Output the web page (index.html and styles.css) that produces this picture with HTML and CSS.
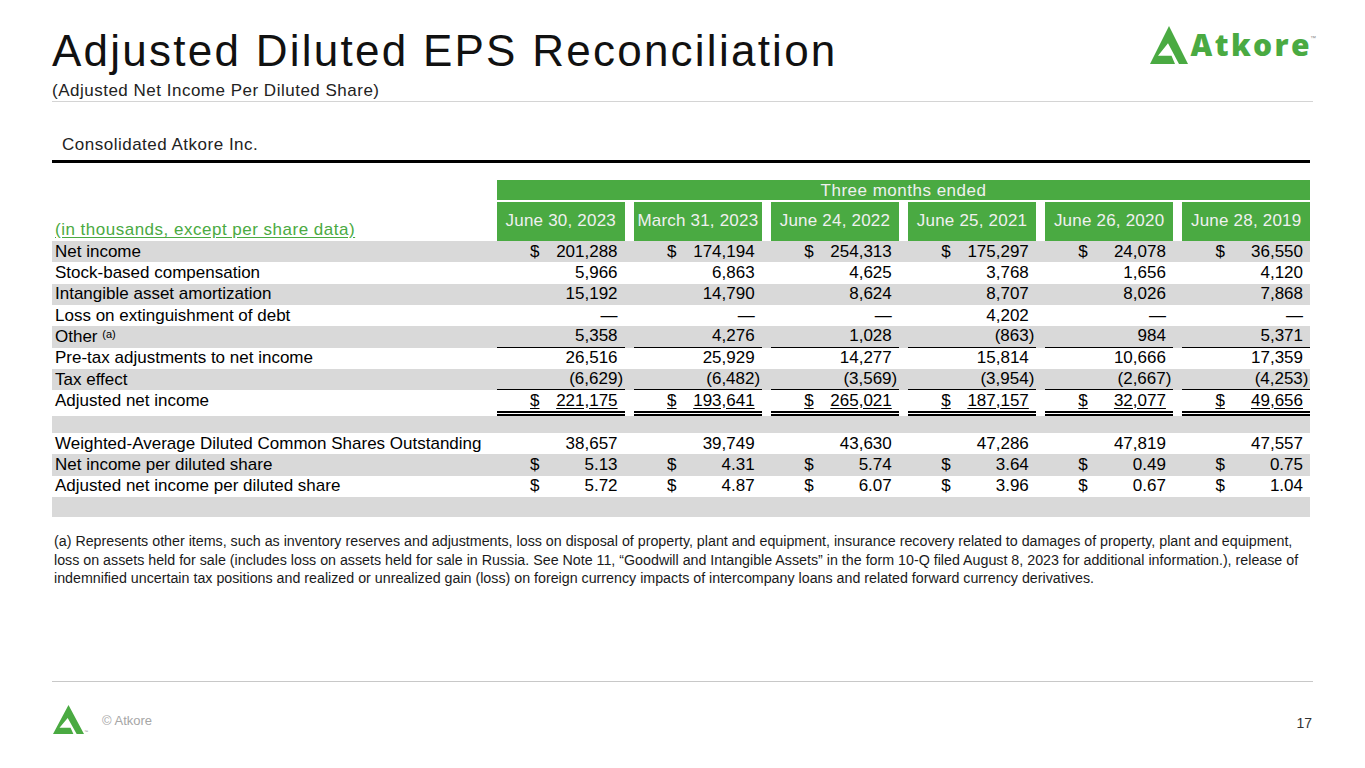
FILE: index.html
```html
<!DOCTYPE html>
<html lang="en">
<head>
<meta charset="utf-8">
<title>Adjusted Diluted EPS Reconciliation</title>
<link rel="stylesheet" href="styles.css">
</head>
<body>
<div class="slide">
  <header class="top">
    <div class="titles">
      <h1 class="title">Adjusted Diluted EPS Reconciliation</h1>
      <p class="subtitle">(Adjusted Net Income Per Diluted Share)</p>
    </div>
    <div class="logo">
      <svg class="logo-mark" viewBox="0 0 38 42" width="38" height="38" preserveAspectRatio="none" aria-hidden="true">
        <path d="M19 0 L38 42 L29 42 L18 19 L8 33 L21.5 33 L25 42 L0 42 Z" fill="#4aaa42"/>
      </svg>
      <span class="logo-text">Atkore</span><span class="logo-tm">™</span>
    </div>
  </header>

  <div class="section">Consolidated Atkore Inc.</div>

  <div class="table">
    <div class="grid band-row">
      <div class="band">Three months ended</div>
    </div>
    <div class="grid head-row">
      <div class="units">(in thousands, except per share data)</div>
      <div class="hcell">June 30, 2023</div>
      <div class="hcell">March 31, 2023</div>
      <div class="hcell">June 24, 2022</div>
      <div class="hcell">June 25, 2021</div>
      <div class="hcell">June 26, 2020</div>
      <div class="hcell">June 28, 2019</div>
    </div>

    <div class="grid row alt">
      <div class="label">Net income</div>
      <div class="cell"><span class="cur">$</span><span class="num">201,288</span></div>
      <div class="cell"><span class="cur">$</span><span class="num">174,194</span></div>
      <div class="cell"><span class="cur">$</span><span class="num">254,313</span></div>
      <div class="cell"><span class="cur">$</span><span class="num">175,297</span></div>
      <div class="cell"><span class="cur">$</span><span class="num">24,078</span></div>
      <div class="cell"><span class="cur">$</span><span class="num">36,550</span></div>
    </div>
    <div class="grid row">
      <div class="label">Stock-based compensation</div>
      <div class="cell"><span class="num">5,966</span></div>
      <div class="cell"><span class="num">6,863</span></div>
      <div class="cell"><span class="num">4,625</span></div>
      <div class="cell"><span class="num">3,768</span></div>
      <div class="cell"><span class="num">1,656</span></div>
      <div class="cell"><span class="num">4,120</span></div>
    </div>
    <div class="grid row alt">
      <div class="label">Intangible asset amortization</div>
      <div class="cell"><span class="num">15,192</span></div>
      <div class="cell"><span class="num">14,790</span></div>
      <div class="cell"><span class="num">8,624</span></div>
      <div class="cell"><span class="num">8,707</span></div>
      <div class="cell"><span class="num">8,026</span></div>
      <div class="cell"><span class="num">7,868</span></div>
    </div>
    <div class="grid row">
      <div class="label">Loss on extinguishment of debt</div>
      <div class="cell"><span class="num">—</span></div>
      <div class="cell"><span class="num">—</span></div>
      <div class="cell"><span class="num">—</span></div>
      <div class="cell"><span class="num">4,202</span></div>
      <div class="cell"><span class="num">—</span></div>
      <div class="cell"><span class="num">—</span></div>
    </div>
    <div class="grid row alt">
      <div class="label">Other&nbsp;<sup class="fn">(a)</sup></div>
      <div class="cell rule"><span class="num">5,358</span></div>
      <div class="cell rule"><span class="num">4,276</span></div>
      <div class="cell rule"><span class="num">1,028</span></div>
      <div class="cell rule"><span class="num neg">(863)</span></div>
      <div class="cell rule"><span class="num">984</span></div>
      <div class="cell rule"><span class="num">5,371</span></div>
    </div>
    <div class="grid row">
      <div class="label">Pre-tax adjustments to net income</div>
      <div class="cell"><span class="num">26,516</span></div>
      <div class="cell"><span class="num">25,929</span></div>
      <div class="cell"><span class="num">14,277</span></div>
      <div class="cell"><span class="num">15,814</span></div>
      <div class="cell"><span class="num">10,666</span></div>
      <div class="cell"><span class="num">17,359</span></div>
    </div>
    <div class="grid row alt">
      <div class="label">Tax effect</div>
      <div class="cell rule"><span class="num neg">(6,629)</span></div>
      <div class="cell rule"><span class="num neg">(6,482)</span></div>
      <div class="cell rule"><span class="num neg">(3,569)</span></div>
      <div class="cell rule"><span class="num neg">(3,954)</span></div>
      <div class="cell rule"><span class="num neg">(2,667)</span></div>
      <div class="cell rule"><span class="num neg">(4,253)</span></div>
    </div>
    <div class="grid row total">
      <div class="label">Adjusted net income</div>
      <div class="cell dbl"><span class="cur">$</span><span class="num">221,175</span></div>
      <div class="cell dbl"><span class="cur">$</span><span class="num">193,641</span></div>
      <div class="cell dbl"><span class="cur">$</span><span class="num">265,021</span></div>
      <div class="cell dbl"><span class="cur">$</span><span class="num">187,157</span></div>
      <div class="cell dbl"><span class="cur">$</span><span class="num">32,077</span></div>
      <div class="cell dbl"><span class="cur">$</span><span class="num">49,656</span></div>
    </div>
    <div class="grid row alt spacer-row"></div>
    <div class="grid row">
      <div class="label">Weighted-Average Diluted Common Shares Outstanding</div>
      <div class="cell"><span class="num">38,657</span></div>
      <div class="cell"><span class="num">39,749</span></div>
      <div class="cell"><span class="num">43,630</span></div>
      <div class="cell"><span class="num">47,286</span></div>
      <div class="cell"><span class="num">47,819</span></div>
      <div class="cell"><span class="num">47,557</span></div>
    </div>
    <div class="grid row alt">
      <div class="label">Net income per diluted share</div>
      <div class="cell"><span class="cur">$</span><span class="num">5.13</span></div>
      <div class="cell"><span class="cur">$</span><span class="num">4.31</span></div>
      <div class="cell"><span class="cur">$</span><span class="num">5.74</span></div>
      <div class="cell"><span class="cur">$</span><span class="num">3.64</span></div>
      <div class="cell"><span class="cur">$</span><span class="num">0.49</span></div>
      <div class="cell"><span class="cur">$</span><span class="num">0.75</span></div>
    </div>
    <div class="grid row">
      <div class="label">Adjusted net income per diluted share</div>
      <div class="cell"><span class="cur">$</span><span class="num">5.72</span></div>
      <div class="cell"><span class="cur">$</span><span class="num">4.87</span></div>
      <div class="cell"><span class="cur">$</span><span class="num">6.07</span></div>
      <div class="cell"><span class="cur">$</span><span class="num">3.96</span></div>
      <div class="cell"><span class="cur">$</span><span class="num">0.67</span></div>
      <div class="cell"><span class="cur">$</span><span class="num">1.04</span></div>
    </div>
    <div class="grid row alt end-row"></div>
  </div>

  <p class="note">(a) Represents other items, such as inventory reserves and adjustments, loss on disposal of property, plant and equipment, insurance recovery related to damages of property, plant and equipment,<br>loss on assets held for sale (includes loss on assets held for sale in Russia. See Note 11, “Goodwill and Intangible Assets” in the form 10-Q filed August 8, 2023 for additional information.), release of<br>indemnified uncertain tax positions and realized or unrealized gain (loss) on foreign currency impacts of intercompany loans and related forward currency derivatives.</p>

  <footer class="foot">
    <svg class="foot-mark" viewBox="0 0 38 42" width="31" height="29" preserveAspectRatio="none" aria-hidden="true">
      <path d="M19 0 L38 42 L29 42 L18 19 L8 33 L21.5 33 L25 42 L0 42 Z" fill="#4aaa42"/>
    </svg>
    <span class="foot-tm">™</span>
    <span class="copy">© Atkore</span>
    <span class="page">17</span>
  </footer>
</div>
</body>
</html>
```

FILE: styles.css
```css
html, body {
  margin: 0;
  padding: 0;
  background: #ffffff;
}

body {
  font-family: "Liberation Sans", Arial, sans-serif;
  color: #000;
}

.slide {
  width: 1365px;
  height: 768px;
  box-sizing: border-box;
  padding: 0 52px;
  display: flex;
  flex-direction: column;
  overflow: hidden;
  background: #fff;
}

/* ---------- header ---------- */
.top {
  display: flex;
  justify-content: space-between;
  align-items: flex-start;
  padding-top: 26px;
  border-bottom: 1px solid #d4d4d4;
}

.titles {
  margin-top: 3.4px;
}

.title {
  margin: 0;
  font-size: 44px;
  line-height: 44px;
  font-weight: normal;
  letter-spacing: 2.25px;
  color: #111;
}

.subtitle {
  margin: 7.8px 0 0;
  font-size: 17px;
  line-height: 20px;
  letter-spacing: 0.5px;
  color: #222;
}

.logo {
  display: flex;
  align-items: flex-start;
  margin-right: -3px;
}

.logo-mark {
  display: block;
  flex: none;
}

.logo-text {
  margin-left: 3px;
  margin-top: 4px;
  font-family: "Open Sans", "Liberation Sans", sans-serif;
  font-weight: 800;
  font-size: 30px;
  line-height: 30px;
  letter-spacing: 2.4px;
  color: #4aaa42;
}

.logo-tm {
  margin-top: 9px;
  margin-left: -2px;
  font-size: 6px;
  line-height: 6px;
  color: #8a8a8a;
}

/* ---------- section title ---------- */
.section {
  margin-top: 33px;
  margin-right: 3px;
  padding: 0 0 5px 10px;
  font-size: 17px;
  line-height: 20px;
  letter-spacing: 0.5px;
  color: #222;
  border-bottom: 3px solid #000;
}

/* ---------- table ---------- */
.table {
  margin-top: 17.2px;
  margin-right: 3px;
  font-size: 17px;
}

.grid {
  display: grid;
  grid-template-columns: 435.5px repeat(6, 1fr);
  column-gap: 9.5px;
}

.band-row {
  height: 19.5px;
}

.band {
  grid-column: 2 / 8;
  background: #4aaa42;
  color: #f0f0f0;
  text-align: center;
  line-height: 21.5px;
  letter-spacing: 0.5px;
  overflow: hidden;
}

.head-row {
  margin-top: 2px;
  height: 39px;
}

.units {
  align-self: end;
  padding-left: 3px;
  padding-bottom: 1px;
  line-height: 20px;
  letter-spacing: 0.5px;
  color: #4aaa42;
  text-decoration: underline;
  text-underline-offset: 2px;
}

.hcell {
  display: flex;
  align-items: center;
  justify-content: center;
  background: #4aaa42;
  color: #f0f0f0;
  line-height: 20px;
  letter-spacing: 0.2px;
  white-space: nowrap;
}

.row {
  height: 21.33px;
  line-height: 20px;
}

.row.alt {
  background: #d9d9d9;
}

.label {
  display: flex;
  align-items: center;
  padding-left: 3px;
  white-space: nowrap;
}

.fn {
  font-size: 11px;
  line-height: 0;
  position: relative;
  top: -3px;
}

.cell {
  display: flex;
  align-items: center;
  padding: 0 7px 0 33px;
  box-sizing: border-box;
  white-space: nowrap;
}

.num {
  margin-left: auto;
}

.num.neg {
  margin-right: -5.5px;
}

.cell.rule {
  border-bottom: 1px solid #000;
}

.row.total {
  height: 25.7px;
}

.row.total .label {
  padding-bottom: 5px;
}

.cell.dbl {
  border-bottom: 5px double #000;
}

.cell.dbl .cur,
.cell.dbl .num {
  text-decoration: underline;
  text-underline-offset: 2px;
}

.spacer-row {
  height: 17.3px;
}

.end-row {
  height: 20px;
}

/* ---------- footnote ---------- */
.note {
  margin: 14.7px 0 0;
  padding-left: 2px;
  font-size: 14.25px;
  line-height: 18.7px;
  color: #1a1a1a;
  white-space: nowrap;
}

/* ---------- footer ---------- */
.foot {
  margin-top: auto;
  height: 87px;
  box-sizing: border-box;
  border-top: 1px solid #c8c8c8;
  display: flex;
  align-items: flex-start;
}

.foot-mark {
  display: block;
  flex: none;
  margin-top: 23px;
  margin-left: 1px;
}

.foot-tm {
  margin-top: 48px;
  font-size: 4px;
  line-height: 4px;
  color: #8a8a8a;
}

.copy {
  margin-top: 31.4px;
  margin-left: 14px;
  font-size: 13px;
  line-height: 16px;
  color: #a6a6a6;
}

.page {
  margin-left: auto;
  margin-right: 1px;
  margin-top: 33.4px;
  font-size: 14px;
  line-height: 16px;
  color: #333;
}
```
